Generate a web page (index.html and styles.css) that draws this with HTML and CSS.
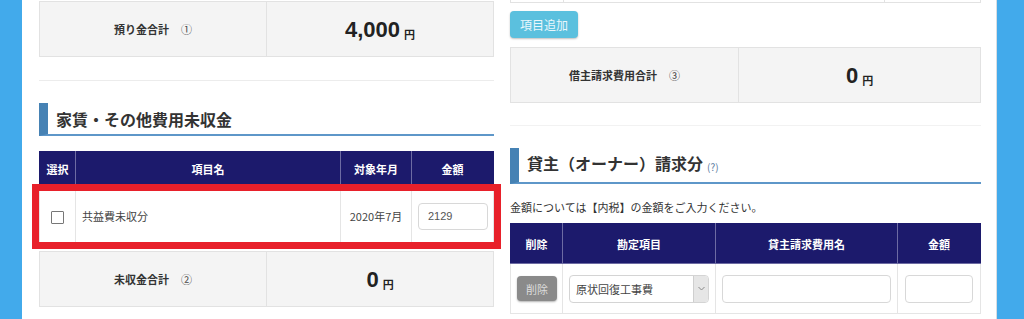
FILE: index.html
```html
<!DOCTYPE html>
<html>
<head>
	<meta charset="utf-8">
	<meta name="viewport" content="width=device-width, initial-scale=1">
	<title>精算</title>

	<link rel="stylesheet" href="styles.css">
</head>
<body>

<div class='page'>
	<div class='side-bar'></div>

	<main class='content'>
		<section class='col col-left'>
			<div class='total'>
				<div class='total-label'>預り金合計<span class='mark'>①</span></div>
				<div class='total-value'>4,000<span class='yen'>円</span></div>
			</div>

			<hr class='sep'>

			<h3 class='heading'>家賃・その他費用未収金</h3>

			<div class='table-wrap'>
				<table class='grid grid-left'>
					<thead>
						<tr>
							<th class='c-select'>選択</th>
							<th>項目名</th>
							<th class='c-month'>対象年月</th>
							<th class='c-amount'>金額</th>
						</tr>
					</thead>
					<tbody>
						<tr>
							<td class='center'><span class='check'></span></td>
							<td>共益費未収分</td>
							<td class='center'>2020年7月</td>
							<td><input class='field field-amount' type='text' value='2129'></td>
						</tr>
					</tbody>
				</table>
				<div class='highlight'></div>
			</div>

			<div class='total total-tight'>
				<div class='total-label'>未収金合計<span class='mark'>②</span></div>
				<div class='total-value'>0<span class='yen'>円</span></div>
			</div>
		</section>

		<section class='col col-right'>
			<div class='table-tail'>
				<span class='tail-a'></span>
				<span class='tail-b'></span>
				<span class='tail-c'></span>
			</div>

			<button class='btn-add'>項目追加</button>

			<div class='total total-right'>
				<div class='total-label'>借主請求費用合計<span class='mark'>③</span></div>
				<div class='total-value'>0<span class='yen'>円</span></div>
			</div>

			<hr class='sep sep-right'>

			<h3 class='heading heading-right'>貸主（オーナー）請求分<span class='help'>(?)</span></h3>

			<p class='note'>金額については【内税】の金額をご入力ください。</p>

			<table class='grid grid-right'>
				<thead>
					<tr>
						<th class='c-del'>削除</th>
						<th class='c-account'>勘定項目</th>
						<th>貸主請求費用名</th>
						<th class='c-sum'>金額</th>
					</tr>
				</thead>
				<tbody>
					<tr>
						<td class='center'><button class='btn-del'>削除</button></td>
						<td>
							<div class='select'>
								<span class='select-text'>原状回復工事費</span>
								<span class='select-arrow'>
									<svg width='7' height='5' viewBox='0 0 7 5'><path d='M0.5 1 L3.5 4 L6.5 1' fill='none' stroke='#888' stroke-width='1'/></svg>
								</span>
							</div>
						</td>
						<td><input class='field' type='text' value=''></td>
						<td><input class='field' type='text' value=''></td>
					</tr>
				</tbody>
			</table>
		</section>
	</main>

	<div class='side-bar side-bar-right'></div>
</div>

</body>
</html>
```

FILE: styles.css
```css
html, body {
	margin: 0;
	padding: 0;
	height: 100%;
	overflow: hidden;
}

body {
	font-family: 'Noto Sans CJK JP', 'Liberation Sans', sans-serif;
	color: #333;
	background: #fff;
}

.page {
	display: flex;
	height: 319px;
}

.side-bar {
	width: 22px;
	flex: none;
	background: #42aaeb;
}

.side-bar-right {
	width: 27px;
	border-left: 1px solid #d8dde2;
}

.content {
	display: flex;
	gap: 16px;
	padding: 0 15px 0 17px;
	flex: none;
}

.col {
	display: flex;
	flex-direction: column;
	align-items: stretch;
}

.col-left {
	width: 455px;
}

.col-right {
	width: 471px;
}

/* totals */

.total {
	display: flex;
	height: 54px;
	margin-top: 1px;
	border: 1px solid #e2e2e2;
	background: #f4f4f4;
}

.total-tight {
	margin-top: 4px;
}

.total-right {
	margin-top: 9px;
}

.total-label {
	width: 226px;
	border-right: 1px solid #e2e2e2;
	display: flex;
	align-items: center;
	justify-content: center;
	font-size: 11px;
	font-weight: bold;
	color: #333;
}

.total-right .total-label {
	width: 227px;
}

.mark {
	font-weight: normal;
	margin-left: 12px;
	color: #444;
}

.total-value {
	flex: 1;
	display: flex;
	align-items: center;
	justify-content: center;
	font-family: 'Liberation Sans', sans-serif;
	font-size: 22px;
	font-weight: bold;
	color: #222;
	padding-top: 2px;
}

.yen {
	font-family: 'Noto Sans CJK JP', sans-serif;
	font-size: 11px;
	margin-left: 4px;
	margin-top: 7px;
}

.sep {
	border: 0;
	border-top: 1px solid #ececec;
	margin: 23px 0 0;
	height: 0;
}

.sep-right {
	margin-top: 22px;
	border-top-color: #f2f2f2;
}

/* headings */

.heading {
	margin: 22px 0 0;
	height: 31px;
	border-left: 9px solid #4682b4;
	border-bottom: 2px solid #5e97c9;
	padding-left: 8px;
	display: flex;
	align-items: center;
	font-size: 16px;
	font-weight: bold;
	color: #333;
}

.heading-right {
	height: 30px;
	padding-bottom: 4px;
}

.help {
	font-size: 10px;
	font-weight: normal;
	color: #5a7aa0;
	margin-left: 4px;
	margin-top: 6px;
}

.note {
	margin: 16px 0 0;
	font-size: 11px;
	line-height: 14px;
	color: #333;
}

/* tables */

.table-wrap {
	position: relative;
	margin-top: 15px;
}

.grid {
	width: 100%;
	border-collapse: collapse;
	table-layout: fixed;
}

.grid th {
	background: #1c1a6c;
	color: #fff;
	font-size: 11px;
	font-weight: bold;
	height: 33px;
	padding: 0;
	border: 1px solid #6d6ba3;
	border-top-color: #1c1a6c;
}

.grid th:first-child {
	border-left-color: #1c1a6c;
}

.grid th:last-child {
	border-right-color: #1c1a6c;
}

.grid td {
	border: 1px solid #e5e5e5;
	font-size: 11px;
	color: #444;
	height: 60px;
	padding: 0 6px;
}

.grid-left .c-select { width: 35px; }
.grid-left .c-month { width: 70px; }
.grid-left .c-amount { width: 81px; }

.grid-right {
	margin-top: 9px;
}

.grid-right th {
	height: 39px;
}

.grid-right td {
	height: 49px;
	padding: 0 6px;
}

.grid-right td:last-child {
	padding: 0 7px;
}

.grid-right .c-del { width: 51px; }
.grid-right .c-account { width: 152px; }
.grid-right .c-sum { width: 82px; }

.center {
	text-align: center;
}

.check {
	display: inline-block;
	width: 11px;
	height: 11px;
	border: 1px solid #777;
	border-radius: 1px;
	vertical-align: middle;
	background: #fff;
}

.field {
	box-sizing: border-box;
	width: 100%;
	height: 28px;
	border: 1px solid #d8d8d8;
	border-radius: 4px;
	padding: 0 9px;
	font-family: 'Liberation Sans', sans-serif;
	font-size: 11px;
	color: #555;
	background: #fff;
	display: block;
}

.field-amount {
	width: 70px;
	height: 27px;
}

.highlight {
	position: absolute;
	left: -7px;
	right: -7px;
	top: 33px;
	bottom: -2px;
	border: 7px solid #e8202a;
	pointer-events: none;
}

.table-tail {
	display: flex;
	height: 2px;
	border: 1px solid #e2e2e2;
	border-top: 0;
}

.table-tail span {
	border-right: 1px solid #e2e2e2;
}

.tail-a { width: 52px; }
.tail-b { width: 320px; }
.tail-c { flex: 1; border-right: 0 !important; }

.btn-add {
	align-self: flex-start;
	margin-top: 8px;
	height: 27px;
	padding: 0 10px;
	border: 0;
	border-radius: 4px;
	background: #5bc0de;
	color: #eaf7fc;
	font-family: 'Noto Sans CJK JP', sans-serif;
	font-size: 12px;
	box-shadow: 0 1px 2px rgba(0, 0, 0, 0.25);
}

.btn-del {
	width: 40px;
	height: 25px;
	border: 0;
	border-radius: 4px;
	background: #8a8a8a;
	color: #ddd;
	font-family: 'Noto Sans CJK JP', sans-serif;
	font-size: 11px;
	padding: 0;
	box-shadow: 0 1px 2px rgba(0, 0, 0, 0.3);
	vertical-align: middle;
}

.select {
	display: flex;
	height: 26px;
	border: 1px solid #d4d4d4;
	border-radius: 4px;
	background: #fff;
	overflow: hidden;
}

.select-text {
	flex: 1;
	display: flex;
	align-items: center;
	padding-left: 6px;
	font-size: 11px;
	color: #444;
}

.select-arrow {
	width: 14px;
	display: flex;
	align-items: center;
	justify-content: center;
	background: #e6e6e6;
	border-left: 1px solid #cfcfcf;
}
```
